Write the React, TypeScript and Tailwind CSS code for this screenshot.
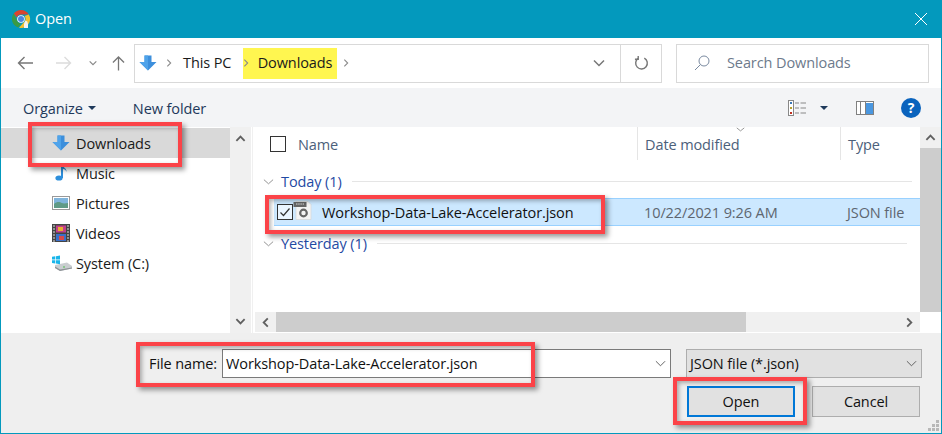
import React from "react";

const DownArrow = ({ className = "" }: { className?: string }) => (
  <svg viewBox="0 0 18 16" className={className}>
    <path d="M5.500 0.500H12.500V7H17.500L9 15.500L0.500 7H5.500Z" fill="#3d8fdc" />
    <path d="M9 15.500L0.500 7H5.500V0.500H9Z" fill="#4fa3ea" />
  </svg>
);

const Chev = ({ d, className = "", stroke = "#666", w = 1 }: { d: string; className?: string; stroke?: string; w?: number }) => (
  <svg viewBox="0 0 12 12" className={className} fill="none" stroke={stroke} strokeWidth={w}>
    <path d={d} />
  </svg>
);

const ChromeIcon = () => (
  <svg viewBox="0 0 20 20" className="w-[20px] h-[20px] shrink-0">
    <path d="M10 1a9 9 0 0 1 7.800 4.500H10a4.500 4.500 0 0 0-4.200 2.900L2.800 4.600A9 9 0 0 1 10 1Z" fill="#d9442f" />
    <path d="M2.800 4.600 6.600 12.700A4.500 4.500 0 0 0 10 14.500L7.200 18.600A9 9 0 0 1 2.800 4.600Z" fill="#3b9a44" />
    <path d="M17.800 5.500A9 9 0 0 1 8 18.800L12.600 13.600A4.500 4.500 0 0 0 13.500 7Z" fill="#f2c230" />
    <circle cx="10" cy="10" r="3.800" fill="#fff" />
    <circle cx="10" cy="10" r="3" fill="#4a86e0" />
    <path d="M13 14.500l1.500-3 1.800 1 .7 2.500v4h-4Z" fill="#f2f2f2" />
  </svg>
);

const RedBox = ({ className }: { className: string }) => (
  <div className={"absolute border-[4px] border-[#fb4348] shadow-[3px_3px_5px_rgba(0,0,0,0.4),inset_2px_2px_4px_rgba(0,0,0,0.3)] pointer-events-none " + className} />
);

const TreeRow = ({ icon, label, selected }: { icon: React.ReactNode; label: string; selected?: boolean }) => (
  <div className={"h-[30px] flex items-center " + (selected ? "bg-[#d9d9d9]" : "")}>
    <div className="w-[75px] pl-[51px] flex items-center shrink-0">{icon}</div>
    <span className="pt-[2px] text-[#1a1a1a]">{label}</span>
  </div>
);

const GroupHead = ({ label, lineWidth }: { label: string; lineWidth: string }) => (
  <div className="h-[20px] flex items-center pl-[10px]">
    <Chev d="M1 4l5 4.500L11 4" className="w-[11px] h-[11px]" stroke="#8a8a8a" />
    <span className="ml-[7px] pt-[2px] text-[#1f4aa3] whitespace-nowrap">{label}</span>
    <div className={"ml-[10px] h-[1px] bg-[#e5e5e5] " + lineWidth} />
  </div>
);

export default function App() {
  return (
    <div
      className="relative w-[942px] h-[434px] flex flex-col border-x border-b border-[#0399bd] bg-[#efefef] text-[14.5px] overflow-hidden"
      style={{ fontFamily: '"Open Sans","Noto Sans","Liberation Sans",sans-serif', letterSpacing: "-0.1px" }}
    >
      {/* Title */}
      <div className="h-[38px] shrink-0 bg-[#0399bd] flex items-center pl-[10px] pr-[13px] text-white">
        <ChromeIcon />
        <span className="ml-[4px] text-[14.5px]">Open</span>
        <svg viewBox="0 0 14 14" className="ml-auto w-[14px] h-[14px]" stroke="#fff" strokeWidth="1" fill="none">
          <path d="M1 1l12 12M13 1L1 13" />
        </svg>
      </div>

      {/* Nav */}
      <div className="h-[50px] shrink-0 bg-white flex items-center pl-[16px] pr-[12px]">
        <svg viewBox="0 0 16 14" className="w-[16px] h-[14px]" fill="none" stroke="#777" strokeWidth="1.4"><path d="M16 7H1.500M7.500 1L1.500 7l6 6" /></svg>
        <svg viewBox="0 0 16 14" className="ml-[23px] w-[16px] h-[14px]" fill="none" stroke="#dcdcdc" strokeWidth="1.4"><path d="M0 7h14.500M8.500 1l6 6-6 6" /></svg>
        <Chev d="M2 4l4 4 4-4" className="ml-[16px] w-[10px] h-[10px]" stroke="#888" w={1.4} />
        <svg viewBox="0 0 14 16" className="ml-[14px] w-[13px] h-[16px]" fill="none" stroke="#777" strokeWidth="1.4"><path d="M7 16V1.500M1 7.500l6-6 6 6" /></svg>
        <div className="ml-[9px] w-[528px] h-[39px] border border-[#d9d9d9] flex items-center">
          <DownArrow className="ml-[4px] w-[18px] h-[16px] -mt-[1px]" />
          <Chev d="M4 2l4 4-4 4" className="ml-[7px] w-[10px] h-[10px]" stroke="#8a8a8a" w={1.3} />
          <span className="ml-[9px] text-[#1a1a1a]">This PC</span>
          <div className="ml-[12px] w-[94px] h-[31px] bg-[#fff650] flex items-center text-[#1a1a1a] shrink-0">
            <Chev d="M4 2l4 4-4 4" className="-ml-[2px] w-[10px] h-[10px] shrink-0" stroke="#8a8a8a" w={1.3} />
            <span className="ml-auto mr-[5px]">Downloads</span>
          </div>
          <Chev d="M4 2l4 4-4 4" className="ml-[4px] w-[10px] h-[10px]" stroke="#8a8a8a" w={1.3} />
          <Chev d="M1 3.500l5 5 5-5" className="ml-auto mr-[15px] w-[12px] h-[12px]" stroke="#777" w={1.5} />
          <div className="w-[41px] h-full border-l border-[#d9d9d9] flex items-center justify-center">
            <svg viewBox="0 0 16 16" className="w-[15px] h-[15px]" fill="none" stroke="#777" strokeWidth="1.5"><path d="M4.500 2.500A6.200 6.200 0 1 0 11 2.200" /><path d="M4.500 0v3.400H1" /></svg>
          </div>
        </div>
        <div className="ml-auto w-[253px] h-[39px] border border-[#d9d9d9] flex items-center pl-[17px]">
          <svg viewBox="0 0 16 16" className="w-[16px] h-[16px]" fill="none" stroke="#7a8aa0" strokeWidth="1"><circle cx="10" cy="6" r="5" /><path d="M6.500 9.500L1 15" /></svg>
          <span className="ml-[17px] text-[#6d7a8c]">Search Downloads</span>
        </div>
      </div>

      {/* Toolbar */}
      <div className="h-[39px] shrink-0 bg-[#f3f4f6] flex items-center pl-[22px] pr-[20px] text-[#1e395b]">
        <span className="pt-[2px]">Organize</span>
        <div className="ml-[5px] w-0 h-0 border-x-[4px] border-x-transparent border-t-[4px] border-t-[#1e395b]" />
        <span className="ml-[37px] pt-[2px]">New folder</span>
        <svg viewBox="0 0 18 16" className="ml-auto w-[18px] h-[16px]" fill="none">
          <rect x="0.500" y="0.500" width="5" height="15" stroke="#888" fill="#fff" />
          <rect x="2" y="2" width="2" height="2" fill="#3a78b8" /><rect x="2" y="7" width="2" height="2" fill="#b5a030" /><rect x="2" y="12" width="2" height="2" fill="#c03020" />
          <path d="M7 3h4M12.500 3H18M7 8h4M12.500 8H18M7 13h4M12.500 13H18" stroke="#888" />
        </svg>
        <div className="ml-[14px] w-0 h-0 border-x-[4px] border-x-transparent border-t-[4px] border-t-[#1e395b]" />
        <svg viewBox="0 0 18 14" className="ml-[28px] w-[18px] h-[14px]">
          <rect x="0.500" y="0.500" width="17" height="13" fill="#fff" stroke="#808080" />
          <rect x="10" y="2" width="7" height="11" fill="#4a97e0" />
          <path d="M4.500 1v12M9.500 1v12" stroke="#808080" />
        </svg>
        <div className="ml-[27px] w-[20px] h-[20px] rounded-full bg-[#0a63bd] text-white font-bold text-[14px] flex items-center justify-center">?</div>
      </div>

      {/* Main */}
      <div className="h-[206px] shrink-0 bg-white flex">
        <div className="w-[229px] pt-[1px] shrink-0">
          <TreeRow selected label="Downloads" icon={<DownArrow className="w-[18px] h-[16px]" />} />
          <TreeRow label="Music" icon={
            <svg viewBox="0 0 14 16" className="w-[14px] h-[16px] ml-[3px]" fill="#2d8fdc"><ellipse cx="4" cy="13" rx="3.600" ry="2.600" /><path d="M6 0h2c0 3 4 3 3.500 7-.4-2-2-3-3.500-3v9H6Z" /></svg>
          } />
          <TreeRow label="Pictures" icon={
            <svg viewBox="0 0 18 14" className="w-[18px] h-[14px]">
              <rect x="0.500" y="0.500" width="17" height="13" fill="#fff" stroke="#999" />
              <rect x="2" y="2" width="14" height="6" fill="#7fb4dc" />
              <path d="M2 8c3-3 6-2 8-1s4 0 6 0v5H2Z" fill="#5f9a86" />
            </svg>
          } />
          <TreeRow label="Videos" icon={
            <svg viewBox="0 0 18 18" className="w-[18px] h-[18px]">
              <rect width="18" height="18" fill="#444" />
              <path d="M1 2h2M1 5h2M1 8h2M1 11h2M1 14h2M1 17h2M15 2h2M15 5h2M15 8h2M15 11h2M15 14h2M15 17h2" stroke="#ddd" strokeWidth="1.200" />
              <rect x="4" y="1.500" width="10" height="7" fill="#c33f8a" /><rect x="6" y="3" width="5" height="4" fill="#e8b030" />
              <rect x="4" y="10" width="10" height="7" fill="#3a6fc8" /><rect x="7" y="12" width="5" height="4" fill="#d84a4a" />
            </svg>
          } />
          <TreeRow label="System (C:)" icon={
            <svg viewBox="0 0 20 16" className="w-[20px] h-[16px]">
              <path d="M3 10L15 7.500l5 3.500v2.500L8 16 3 13Z" fill="#c9cdd0" />
              <path d="M3 13l5 3 12-2.500v-1L8 14.500 3 11.500Z" fill="#8d9296" />
              <rect x="11" y="11.500" width="2" height="1" fill="#4cc04c" />
              <path d="M0 1.800L3.300 1.300V4.500H0ZM4 1.200L8 .5V4.500H4ZM0 5.200H3.300V8.500L0 8ZM4 5.200H8V9.300L4 8.600Z" fill="#19b5ea" />
            </svg>
          } />
        </div>

        {/* Tree scrollbar */}
        <div className="w-[21px] shrink-0 bg-[#f0f0f0] flex flex-col items-center justify-between py-[6px]">
          <Chev d="M1.500 8.500L6 4l4.500 4.500" className="w-[11px] h-[11px]" stroke="#606060" w={2} />
          <Chev d="M1.500 3.500L6 8l4.500-4.500" className="w-[11px] h-[11px]" stroke="#606060" w={2} />
        </div>
        <div className="w-[1px] shrink-0" />
        <div className="w-[1px] bg-[#f0f0f0] shrink-0" />

        {/* List */}
        <div className="flex-1 min-w-0 flex flex-col">
          <div className="flex-1 min-h-0 flex">
            <div className="flex-1 min-w-0 flex flex-col">
              <div className="relative h-[33px] flex items-center text-[#4c607a]">
                <div className="ml-[17px] w-[16px] h-[16px] border border-[#333] bg-white shrink-0" />
                <span className="ml-[12px] pt-[2px] w-[340px] h-full flex items-center border-r border-[#e5e5e5]">Name</span>
                <span className="w-[203px] pt-[2px] h-full flex items-center pl-[7px] border-r border-[#e5e5e5]">Date modified</span>
                <span className="pl-[7px] pt-[2px]">Type</span>
                <Chev d="M1 2.500l5 4 5-4" className="absolute left-[482px] top-[-1px] w-[11px] h-[9px]" stroke="#777" />
              </div>
              <div className="pt-[11px]">
                <GroupHead label="Today (1)" lineWidth="w-[560px]" />
              </div>
              <div className="mt-[7px] ml-[21px] h-[28px] bg-[#cce8ff] border-y border-[#99d1ff] flex items-center">
                <div className="ml-[3px] w-[16px] h-[16px] border border-[#333] bg-[#eaf5ff] flex items-center justify-center shrink-0">
                  <svg viewBox="0 0 12 12" className="w-[12px] h-[12px]" fill="none" stroke="#333" strokeWidth="1.200"><path d="M1.500 6.500l3 3 6-7" /></svg>
                </div>
                <svg viewBox="0 0 20 20" className="ml-[0px] w-[20px] h-[20px] shrink-0 -mt-[4px]">
                  <path d="M3 1.500H15L18 4.500V19.500H3Z" fill="#f4f4f4" stroke="#d5d5d5" strokeWidth="0.700" />
                  <rect x="0.500" y="2" width="13" height="5" fill="#666" />
                  <path d="M3 4h8" stroke="#ddd" strokeWidth="1" strokeDasharray="1.500 .7" />
                  <circle cx="10.500" cy="13" r="3.300" fill="none" stroke="#666" strokeWidth="2.200" />
                </svg>
                <span className="ml-[9px] pt-[2px] w-[322px] text-[#111] whitespace-nowrap">Workshop-Data-Lake-Accelerator.json</span>
                <span className="w-[203px] pt-[2px] text-[#5e6670] whitespace-nowrap">10/22/2021 9:26 AM</span>
                <span className="text-[#5e6670] pt-[2px] whitespace-nowrap">JSON file</span>
              </div>
              <div className="pt-[7px]">
                <GroupHead label="Yesterday (1)" lineWidth="w-[530px]" />
              </div>
            </div>
            <div className="w-[21px] shrink-0 bg-[#f0f0f0] flex flex-col">
              <div className="h-[21px] bg-[#f0f0f0] flex items-center justify-center">
                <Chev d="M1.500 8.500L6 4l4.500 4.500" className="w-[11px] h-[11px]" stroke="#606060" w={2} />
              </div>
              <div className="flex-1 bg-[#cdcdcd]" />
            </div>
          </div>
          <div className="h-[20px] shrink-0 flex items-stretch bg-white mb-[1px]">
            <div className="ml-[2px] w-[21px] bg-[#f0f0f0] flex items-center justify-center">
              <Chev d="M8.500 1.500L4 6l4.500 4.500" className="w-[11px] h-[11px]" stroke="#606060" w={2} />
            </div>
            <div className="w-[470px] bg-[#cdcdcd]" />
            <div className="flex-1 bg-[#f0f0f0] flex items-center justify-end pr-[5px]">
              <Chev d="M3.500 1.500L8 6l-4.500 4.500" className="w-[11px] h-[11px]" stroke="#606060" w={2} />
            </div>
            <div className="w-[21px] bg-white" />
          </div>
        </div>
      </div>

      {/* Footer */}
      <div className="flex-1 min-h-0 pt-[16px] pl-[148px] pr-[19px] flex flex-col">
        <div className="h-[29px] flex items-stretch text-[#111]">
          <span className="w-[73px] flex items-center">File name:</span>
          <div className="w-[449px] bg-white border border-[#7a7a7a] flex items-center pl-[3px]">
            <span>Workshop-Data-Lake-Accelerator.json</span>
            <Chev d="M1 3.500l5 5 5-5" className="ml-auto mr-[4px] w-[11px] h-[11px]" stroke="#555" />
          </div>
          <div className="ml-[15px] flex-1 bg-[#e1e1e1] border border-[#adadad] flex items-center pl-[3px]">
            <span>JSON file (*.json)</span>
            <Chev d="M1 3.500l5 5 5-5" className="ml-auto mr-[4px] w-[11px] h-[11px]" stroke="#555" />
          </div>
        </div>
        <div className="mt-[8px] mr-[2px] flex justify-end gap-[17px] text-[#111]">
          <div className="w-[108px] h-[31px] bg-[#e1e1e1] border-2 border-[#0078d7] flex items-center justify-center">Open</div>
          <div className="w-[108px] h-[31px] bg-[#e1e1e1] border border-[#adadad] flex items-center justify-center">Cancel</div>
        </div>
      </div>

      {/* Resize grip */}
      <svg viewBox="0 0 12 12" className="absolute right-[1px] bottom-[1px] w-[12px] h-[12px]" fill="#b8b8b8">
        <rect x="8" y="0" width="3" height="3" /><rect x="4" y="4" width="3" height="3" /><rect x="8" y="4" width="3" height="3" />
        <rect x="0" y="8" width="3" height="3" /><rect x="4" y="8" width="3" height="3" /><rect x="8" y="8" width="3" height="3" />
      </svg>

      {/* Annotations */}
      <RedBox className="left-[27px] top-[122px] w-[154px] h-[45px]" />
      <RedBox className="left-[264px] top-[195px] w-[340px] h-[39px]" />
      <RedBox className="left-[135px] top-[342px] w-[399px] h-[45px]" />
      <RedBox className="left-[672px] top-[377px] w-[134px] h-[48px]" />
    </div>
  );
}
